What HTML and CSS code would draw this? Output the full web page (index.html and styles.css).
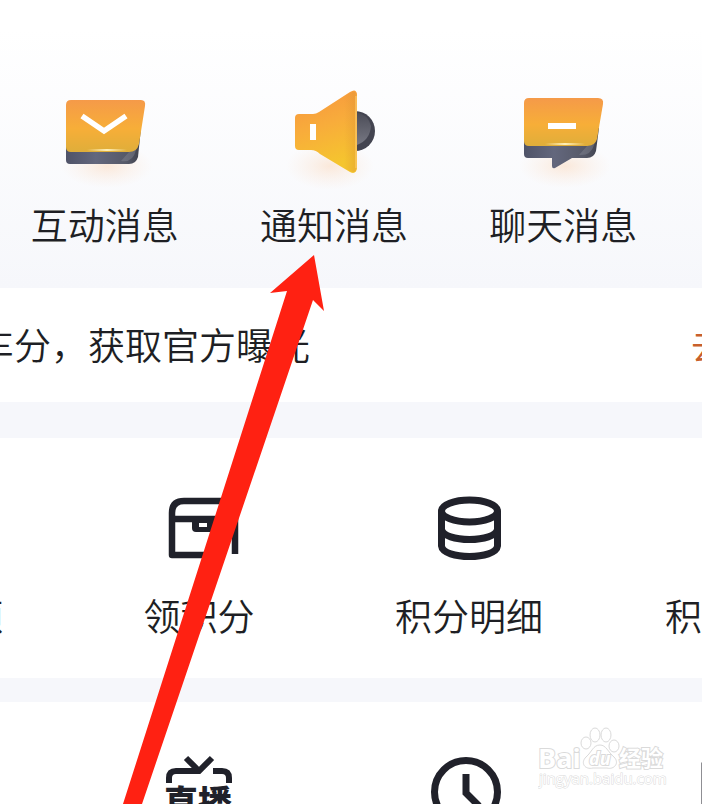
FILE: index.html
```html
<!DOCTYPE html>
<html lang="zh-CN">
<head>
<meta charset="utf-8">
<meta name="viewport" content="width=device-width, initial-scale=1">
<title>消息</title>
<link rel="stylesheet" href="styles.css">
</head>
<body>
<main class="page">
  <nav class="messages" aria-label="消息">
    <a class="entry" href="#interact">
      <svg class="entry-icon" viewBox="0 0 120 112" aria-hidden="true">
        <defs>
          <linearGradient id="gold" x1="0" y1="0" x2="0" y2="1">
            <stop offset="0" stop-color="#f59a49"/><stop offset=".55" stop-color="#f7ae38"/><stop offset="1" stop-color="#dfae3a"/>
          </linearGradient>
          <linearGradient id="slate" x1="0" y1="0" x2="1" y2="0">
            <stop offset="0" stop-color="#4f5368"/><stop offset=".4" stop-color="#63677d"/><stop offset=".8" stop-color="#565968"/><stop offset="1" stop-color="#3e404c"/>
          </linearGradient>
          <linearGradient id="shine" x1="0" y1="0" x2="1" y2="0">
            <stop offset="0" stop-color="#fff0b8" stop-opacity="0"/><stop offset=".5" stop-color="#fff0b8"/><stop offset="1" stop-color="#fff0b8" stop-opacity="0"/>
          </linearGradient>
          <radialGradient id="glow">
            <stop offset="0" stop-color="#fbd9bd" stop-opacity=".55"/><stop offset="1" stop-color="#fbe5d4" stop-opacity="0"/>
          </radialGradient>
        </defs>
        <ellipse cx="62" cy="82" rx="46" ry="22" fill="url(#glow)"/>
        <path d="M21 44H96L93 73Q91 80 84 80H25Q21 80 21 76Z" fill="url(#slate)"/>
        <path d="M94 58Q91 68 84 68L76 77Q88 79 91 66Z" fill="#8a8d99" opacity=".4"/>
        <path d="M26 16H96Q101 16 100 22L94 60Q92 68 84 68H26Q21 68 21 63V21Q21 16 26 16Z" fill="url(#gold)"/>
        <path d="M42 65H82V67H42Z" fill="url(#shine)"/>
        <path d="M37 32L59 47L81 32" fill="none" stroke="#fff" stroke-width="5.5"/>
      </svg>
      <span>互动消息</span>
    </a>
    <a class="entry" href="#notice">
      <svg class="entry-icon" viewBox="0 0 120 112" aria-hidden="true">
        <defs>
          <linearGradient id="horn" x1="0" y1="0" x2=".25" y2="1">
            <stop offset="0" stop-color="#f7943f"/><stop offset=".5" stop-color="#f8ac3b"/><stop offset="1" stop-color="#f5c52e"/>
          </linearGradient>
          <linearGradient id="rim" x1="0" y1="0" x2="1" y2="0">
            <stop offset="0" stop-color="#d88e31" stop-opacity="0"/><stop offset=".8" stop-color="#d88e31" stop-opacity=".65"/><stop offset="1" stop-color="#f8b143"/>
          </linearGradient>
          <linearGradient id="ball" x1="0" y1="0" x2="0" y2="1"><stop offset="0" stop-color="#4a4b56"/><stop offset="1" stop-color="#777883"/></linearGradient>
        </defs>
        <ellipse cx="56" cy="82" rx="44" ry="24" fill="url(#glow)"/>
        <circle cx="81" cy="47" r="20" fill="#434450"/>
        <path d="M81 28Q94 30 97 42Q96 56 83 61H81Z" fill="url(#ball)"/>
        <path d="M25 30H39Q42 30 45 28L76 8Q82 4 83 10V84Q82 91 76 88L46 70Q42 66 37 66H25Q21 66 21 62V34Q21 30 25 30Z" fill="url(#horn)"/>
        <path d="M70 13L76 9Q82 6 83 11V84Q82 90 76 87L70 84Z" fill="url(#rim)" opacity=".5"/>
        <path d="M82 12V84" fill="none" stroke="#ffd071" stroke-width="1.5" opacity=".65"/>
        <path d="M36 40H42V56H36Z" fill="#fff"/>
      </svg>
      <span>通知消息</span>
    </a>
    <a class="entry" href="#chat">
      <svg class="entry-icon" viewBox="0 0 120 112" aria-hidden="true">
        <ellipse cx="62" cy="82" rx="46" ry="22" fill="url(#glow)"/>
        <path d="M21 44H96L93 67Q91 74 84 74H69L52 84Q49 85 49 82V74H25Q21 74 21 70Z" fill="url(#slate)"/>
        <path d="M94 53Q91 62 84 62L76 71Q88 72 91 61Z" fill="#8a8d99" opacity=".4"/>
        <path d="M26 14H95Q101 14 100 20L94 55Q92 62 84 62H26Q21 62 21 57V19Q21 14 26 14Z" fill="url(#gold)"/>
        <path d="M42 59H82V61H42Z" fill="url(#shine)"/>
        <path d="M45 39H73V45H45Z" fill="#fff"/>
      </svg>
      <span>聊天消息</span>
    </a>
  </nav>

  <section class="notice">
    <p class="notice-text">车分，获取官方曝光</p>
    <a class="notice-link" href="#go">去</a>
  </section>

  <nav class="tools points" aria-label="积分">
    <a class="tool" href="#quota"><svg class="tool-icon" viewBox="0 0 80 80" aria-hidden="true"></svg><span>积分余额</span></a>
    <a class="tool" href="#claim">
      <svg class="tool-icon" viewBox="0 0 80 80" aria-hidden="true">
        <g fill="none" stroke="#20212a" stroke-width="6.5" stroke-linejoin="round">
          <path d="M62 66H13V24Q13 12 25 12H64Q76 12 76 24V65"/>
          <path d="M13 30H76"/>
        </g>
        <path d="M33 28H55V43H37Q33 43 33 39Z" fill="#20212a"/><path d="M40 34H48V38H40Z" fill="#fff"/>
      </svg>
      <span>领积分</span>
    </a>
    <a class="tool" href="#detail">
      <svg class="tool-icon" viewBox="0 0 80 80" aria-hidden="true">
        <g fill="none" stroke="#20212a" stroke-width="7">
          <ellipse cx="40.500" cy="22" rx="28" ry="11"/>
          <path d="M12.500 22V57C14 71 67 71 68.500 57V22M12.500 40C14 54 67 54 68.500 40"/>
        </g>
      </svg>
      <span>积分明细</span>
    </a>
    <a class="tool" href="#mall"><svg class="tool-icon" viewBox="0 0 80 80" aria-hidden="true"></svg><span>积分商城</span></a>
  </nav>

  <nav class="tools services" aria-label="服务">
    <a class="tool" href="#more"><svg class="tool-icon" viewBox="0 0 80 80" aria-hidden="true"></svg></a>
    <a class="tool" href="#live">
      <svg class="tool-icon" viewBox="0 0 80 80" aria-hidden="true">
        <path d="M10 31V26Q10 19 17 19H40L53 6M27 6L40 19M54 19H63Q70 19 70 26V31" fill="none" stroke="#20212a" stroke-width="6"/>
        <text class="live-text" x="5" y="63">直播</text>
      </svg>
    </a>
    <a class="tool" href="#history">
      <svg class="tool-icon" viewBox="0 0 80 80" aria-hidden="true">
        <g fill="none" stroke="#20212a" stroke-width="7">
          <circle cx="37" cy="40" r="31.500"/>
          <path d="M37 22V41L50 54"/>
        </g>
      </svg>
    </a>
    <a class="tool" href="#other">
      <svg class="tool-icon" viewBox="0 0 80 80" aria-hidden="true"><path d="M5 13H72V75H5Z" fill="none" stroke="#20212a" stroke-width="5"/></svg>
    </a>
  </nav>

  <svg class="pointer" viewBox="0 0 210 560" aria-hidden="true">
    <path d="M194 11L204 67L193 56L22 560H3L167 47L150 49Z" fill="#ff2112"/>
  </svg>

  <svg class="watermark" viewBox="0 0 130 66" aria-hidden="true">
    <g fill="#fff" stroke="#dadada" stroke-width="2">
      <text class="mark-name" x="0" y="42">Bai</text>
      <g stroke-width="1">
        <path d="M62 19C68 19 70 26 76 31C82 37 76 44 69 42H55C47 44 42 37 48 31C54 26 55 19 62 19Z"/>
        <ellipse cx="48" cy="17" rx="5" ry="6"/><ellipse cx="57" cy="9" rx="5" ry="7"/><ellipse cx="68" cy="9" rx="5" ry="7"/><ellipse cx="76" cy="20" rx="5" ry="6"/>
      </g>
      <text class="mark-du" x="51" y="39">du</text>
      <text class="mark-cn" x="81" y="40">经验</text>
      <text class="mark-url" x="1" y="58">jingyan.baidu.com</text>
    </g>
  </svg>
</main>
</body>
</html>
```
FILE: styles.css
```css
* { box-sizing: border-box; }

body {
  margin: 0;
  background: #f6f7fb;
  color: #1e1f24;
  font: 350 37px/48px "Noto Sans CJK SC DemiLight", "Noto Sans CJK SC", sans-serif;
}

a { color: inherit; text-decoration: none; white-space: nowrap; }

.page {
  position: relative;
  display: flex;
  flex-direction: column;
  height: 100vh;
  overflow: hidden;
}

.page::before {
  content: "";
  position: absolute;
  inset: 0 0 auto;
  height: 288px;
  background: linear-gradient(#fff 10%, #f6f7fb);
  z-index: -1;
}

.messages {
  display: grid;
  grid-template-columns: repeat(3, 1fr);
  flex: none;
  margin: 0 24px 0 -10px;
  padding: 84px 0 40px;
}

.entry, .tool {
  display: flex;
  flex-direction: column;
  align-items: center;
}

.entry-icon { width: 120px; height: 112px; margin-bottom: 4px; }

.notice {
  display: flex;
  flex: none;
  justify-content: space-between;
  margin-bottom: 36px;
  padding: 32px 0 34px;
  background: #fff;
}

.notice-text { margin: 0 0 0 -23px; white-space: nowrap; }
.notice-link { margin-right: -26px; color: #c8602c; }

.tools {
  display: grid;
  grid-template-columns: repeat(4, 270px);
  flex: none;
  justify-content: center;
  background: #fff;
}

.points { padding: 51px 34px 39px 0; margin-bottom: 24px; }
.services { padding: 50px 34px 50px 0; }
.tool-icon { width: 80px; height: 80px; margin-bottom: 22px; }

.live-text { font: 900 34px "Noto Sans CJK SC", sans-serif; fill: #20212a; }

/* Annotation arrow and watermark lie over the page content. */
.pointer {
  position: absolute;
  left: 120px;
  bottom: 0;
  width: 210px;
  height: 560px;
}

.watermark {
  position: absolute;
  right: 34px;
  bottom: 12px;
  width: 130px;
  height: 66px;
}

.watermark text { paint-order: stroke; }
.mark-name { font: 700 27px "Open Sans", sans-serif; }
.mark-du { font: italic 700 18px "Open Sans", sans-serif; }
.mark-cn { font: 700 22px "Noto Sans CJK SC", sans-serif; }
.mark-url { font: 400 15px "Open Sans", sans-serif; stroke-width: 1px; }
```
